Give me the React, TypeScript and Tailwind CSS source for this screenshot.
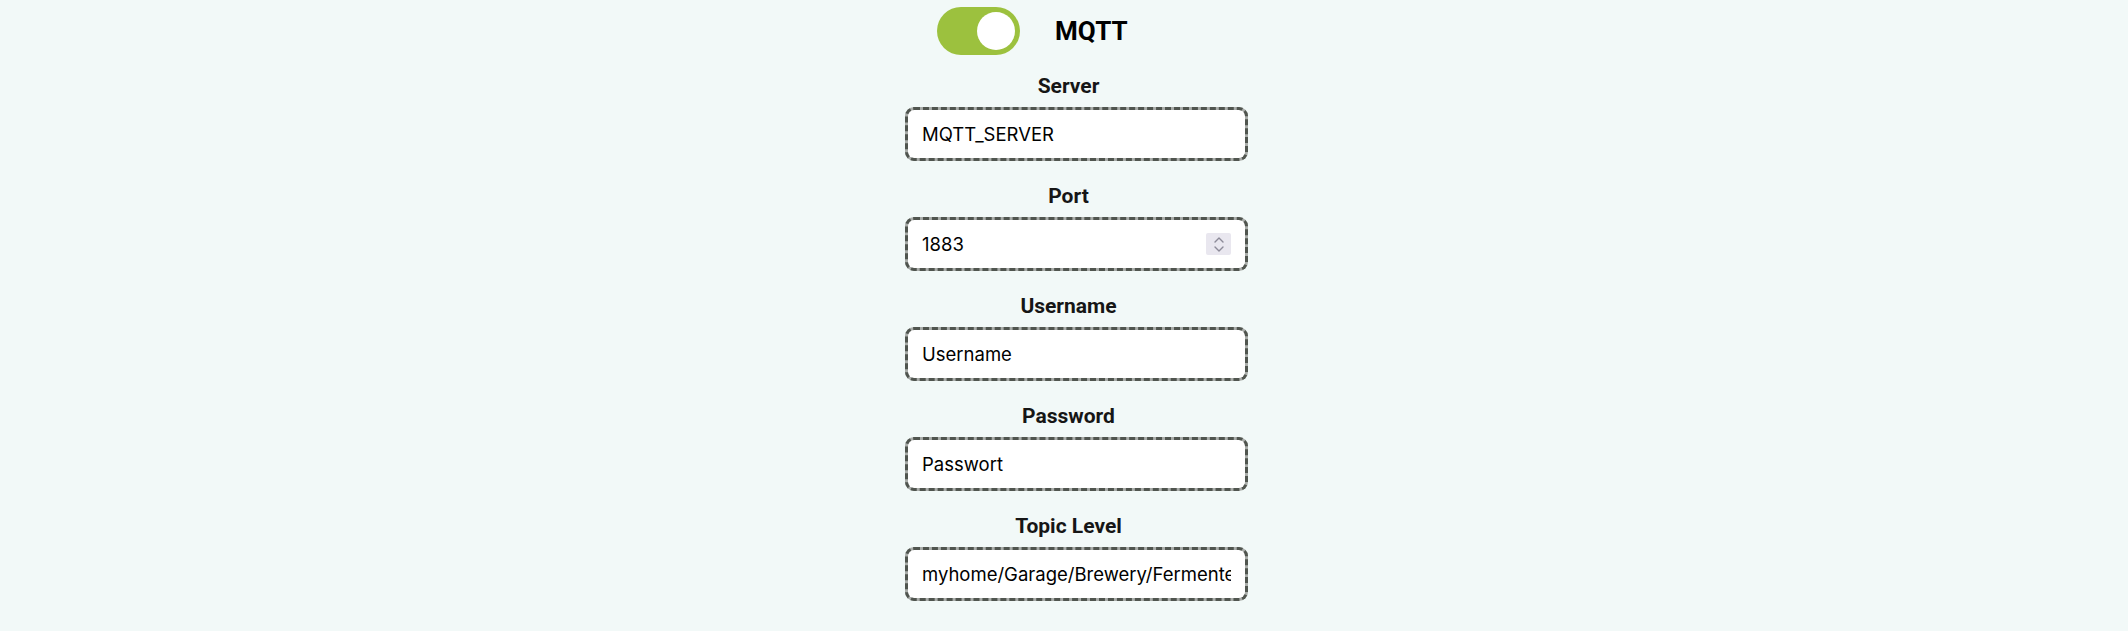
import React from "react";

const labelCls =
  "block text-center text-[21px] leading-[26px] font-bold text-[#161616] [font-family:Roboto,'Liberation_Sans',sans-serif]";

function Field({
  label,
  value,
  spinner,
}: {
  label: string;
  value: string;
  spinner?: boolean;
}) {
  return (
    <div className="flex flex-col items-start">
      <div className="w-[327px]">
        <span className={labelCls}>{label}</span>
      </div>
      <div className="mt-[8px] w-[343px] h-[54px] rounded-[9px] bg-[#a9aca9]">
        <div className="flex items-center w-full h-full rounded-[9px] border-[3px] border-dashed border-[#50554f] bg-white bg-clip-padding px-[14px]">
          <input
            readOnly
            value={value}
            className="flex-1 min-w-0 h-full bg-transparent outline-none border-0 p-0 text-[18.5px] text-black [font-family:Inter,'Liberation_Sans',sans-serif]"
          />
          {spinner && (
            <div className="w-[25px] h-[22px] rounded-[2px] bg-[#e9e7ef] flex flex-col items-center justify-center gap-[3px]">
              <svg width="10" height="6" viewBox="0 0 10 6" fill="none">
                <path d="M1 5 L5 1 L9 5" stroke="#8c8a98" strokeWidth="1.4" strokeLinecap="round" strokeLinejoin="round" />
              </svg>
              <svg width="10" height="6" viewBox="0 0 10 6" fill="none">
                <path d="M1 1 L5 5 L9 1" stroke="#8c8a98" strokeWidth="1.4" strokeLinecap="round" strokeLinejoin="round" />
              </svg>
            </div>
          )}
        </div>
      </div>
    </div>
  );
}

export default function App() {
  return (
    <div className="min-h-screen w-full bg-[#f2f9f8] flex justify-center pl-[9px]">
      <div className="w-[327px] flex flex-col pt-[7px]">
        <div className="flex items-center pl-[32px] h-[48px]">
          <div className="w-[83px] h-[48px] rounded-full bg-[#9cc13e] flex items-center justify-end pr-[5px]">
            <div className="w-[38px] h-[38px] rounded-full bg-white" />
          </div>
          <span className="ml-[35px] text-[26px] font-bold text-black [font-family:Roboto,'Liberation_Sans',sans-serif]">
            MQTT
          </span>
        </div>
        <div className="flex flex-col gap-[22px] mt-[18px]">
          <Field label="Server" value="MQTT_SERVER" />
          <Field label="Port" value="1883" spinner />
          <Field label="Username" value="Username" />
          <Field label="Password" value="Passwort" />
          <Field label="Topic Level" value="myhome/Garage/Brewery/Fermenter" />
        </div>
      </div>
    </div>
  );
}
